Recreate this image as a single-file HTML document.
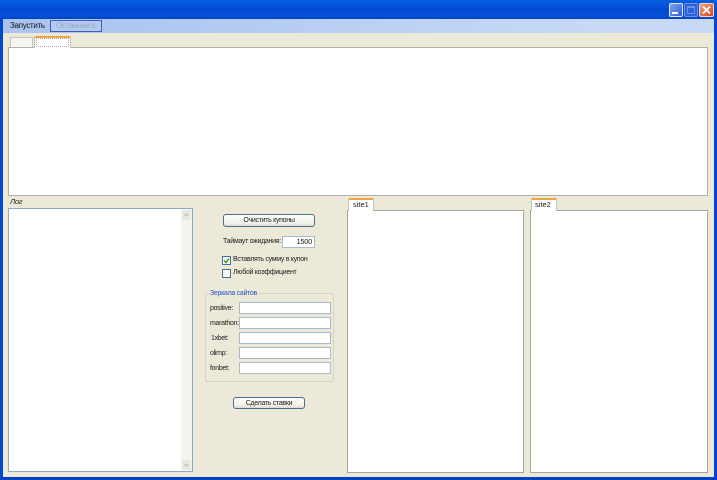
<!DOCTYPE html>
<html><head><meta charset="utf-8"><style>
html,body{margin:0;padding:0}
#w{position:relative;width:717px;height:480px;overflow:hidden;background:#ece9d8;font-family:"Liberation Sans",sans-serif;font-size:7px;letter-spacing:-.3px;color:#222;filter:blur(.3px)}
#w div{position:absolute;box-sizing:border-box}
.t{white-space:nowrap;line-height:10px;height:10px}
.in{background:#fff;border:1px solid #a9bacb}
.btn{border:1px solid #4f6f92;border-radius:3px;background:linear-gradient(#fdfdfb,#f2f0e8 75%,#dcd8cc);text-align:center;line-height:12px}
.pane{background:#fff;border:1px solid #a6a69c}
.tab{background:#fff;border:1px solid #c4c4bc;border-bottom:0;border-top:2px solid #f0a63c;border-radius:2px 2px 0 0}
.cb{width:9px;height:9px;background:#f6f6f2;border:1px solid #4a7098}
</style></head><body><div id="w">
<div style="left:0;top:0;width:717px;height:19px;background:linear-gradient(#0a5fe0 0,#0458dc 3px,#0349d2 10px,#0450d8 16px,#0344c0 19px)"></div>
<div style="left:0;top:19px;width:717px;height:14px;background:linear-gradient(90deg,#a9c3ef,#c6daf6 85%)"></div>
<div style="left:0;top:19px;width:3px;height:461px;background:#0347d0"></div>
<div style="left:714px;top:19px;width:3px;height:461px;background:#0347d0"></div>
<div style="left:0;top:477px;width:717px;height:3px;background:#0342c4"></div>

<div style="left:669px;top:3px;width:14px;height:14px;border:1px solid #dfe8fa;border-radius:2px;background:linear-gradient(135deg,#7fa2ee,#2f5fd8)"></div>
<div style="left:672px;top:12px;width:6px;height:2px;background:#fff"></div>
<div style="left:684px;top:3px;width:14px;height:14px;border:1px solid #6f93e6;border-radius:2px;background:#2b62dc"></div>
<div style="left:687px;top:6px;width:8px;height:8px;border:1px solid #6f93e6;border-top-width:2px"></div>
<div style="left:699px;top:3px;width:15px;height:14px;border:1px solid #f2d5c8;border-radius:2px;background:linear-gradient(135deg,#f0a080,#d8481c)"></div>
<svg style="position:absolute;left:699px;top:3px" width="15" height="14"><path d="M4 3.5L11 10.5M11 3.5L4 10.5" stroke="#fff" stroke-width="1.8"/></svg>

<div class="t" style="left:10px;top:21px;color:#111;font-size:8px">Запустить</div>
<div style="left:50px;top:20px;width:52px;height:12px;border:1px solid #3f5cc0;background:#b4cbf0"></div>
<div class="t" style="left:56px;top:21px;color:#9aa8c0;font-size:8px">Остановить</div>

<div style="left:10px;top:37px;width:23px;height:11px;background:#f6f5f0;border:1px solid #c4c4bc;border-bottom:0"></div>
<div class="tab" style="left:34px;top:36px;width:37px;height:12px;z-index:2"></div>
<div style="left:36px;top:38px;width:33px;height:9px;border:1px dotted #aaa;z-index:3"></div>
<div class="pane" style="left:8px;top:47px;width:700px;height:149px;border-color:#b0b0a8"></div>

<div class="t" style="left:10px;top:197px;font-style:italic;font-size:7.5px">Лог</div>
<div style="left:8px;top:208px;width:185px;height:264px;background:#fff;border:1px solid #8eaac6"></div>
<div style="left:181px;top:209px;width:11px;height:262px;background:#f4f4ee"></div>
<div style="left:182px;top:210px;width:9px;height:10px;background:#e8e8e0;border-radius:1px"></div>
<svg style="position:absolute;left:182px;top:210px" width="9" height="10"><path d="M2.5 6L4.5 4L6.5 6" fill="none" stroke="#b4b4a8" stroke-width="1"/></svg>
<div style="left:182px;top:460px;width:9px;height:10px;background:#e8e8e0;border-radius:1px"></div>
<svg style="position:absolute;left:182px;top:460px" width="9" height="10"><path d="M2.5 4L4.5 6L6.5 4" fill="none" stroke="#b4b4a8" stroke-width="1"/></svg>

<div class="btn" style="left:223px;top:214px;width:92px;height:13px">Очистить купоны</div>
<div class="t" style="left:223px;top:237px">Таймаут ожидания:</div>
<div class="in" style="left:282px;top:236px;width:33px;height:12px;text-align:right;padding-right:2px;line-height:10px;font-size:7.5px">1500</div>
<div class="cb" style="left:222px;top:256px"></div>
<svg style="position:absolute;left:222px;top:256px" width="9" height="9"><path d="M2 4.5L4 6.5L7 2.5" fill="none" stroke="#2e9a2e" stroke-width="1.4"/></svg>
<div class="t" style="left:233px;top:255px">Вставлять сумму в купон</div>
<div class="cb" style="left:222px;top:269px"></div>
<div class="t" style="left:233px;top:268px">Любой коэффициент</div>

<div style="left:205px;top:293px;width:129px;height:89px;border:1px solid #d8d4c0;border-radius:2px"></div>
<div class="t" style="left:209px;top:289px;padding:0 1px;background:#ece9d8;color:#2456c8">Зеркала сайтов</div>
<div class="t" style="left:210px;top:304px">positive:</div>
<div class="in" style="left:239px;top:302px;width:92px;height:12px"></div>
<div class="t" style="left:210px;top:319px">marathon:</div>
<div class="in" style="left:239px;top:317px;width:92px;height:12px"></div>
<div class="t" style="left:211px;top:334px">1xbet:</div>
<div class="in" style="left:239px;top:332px;width:92px;height:12px"></div>
<div class="t" style="left:210px;top:349px">olimp:</div>
<div class="in" style="left:239px;top:347px;width:92px;height:12px"></div>
<div class="t" style="left:210px;top:364px">fonbet:</div>
<div class="in" style="left:239px;top:362px;width:92px;height:12px"></div>
<div class="btn" style="left:233px;top:397px;width:72px;height:12px;line-height:11px">Сделать ставки</div>

<div class="tab" style="left:348px;top:198px;width:26px;height:13px;z-index:2;padding-left:4px;line-height:9px;font-size:7.5px;letter-spacing:0">site1</div>
<div class="pane" style="left:347px;top:210px;width:177px;height:263px"></div>
<div class="tab" style="left:531px;top:198px;width:26px;height:13px;z-index:2;padding-left:3px;line-height:9px;font-size:7.5px;letter-spacing:0">site2</div>
<div class="pane" style="left:530px;top:210px;width:178px;height:263px"></div>
</div></body></html>
